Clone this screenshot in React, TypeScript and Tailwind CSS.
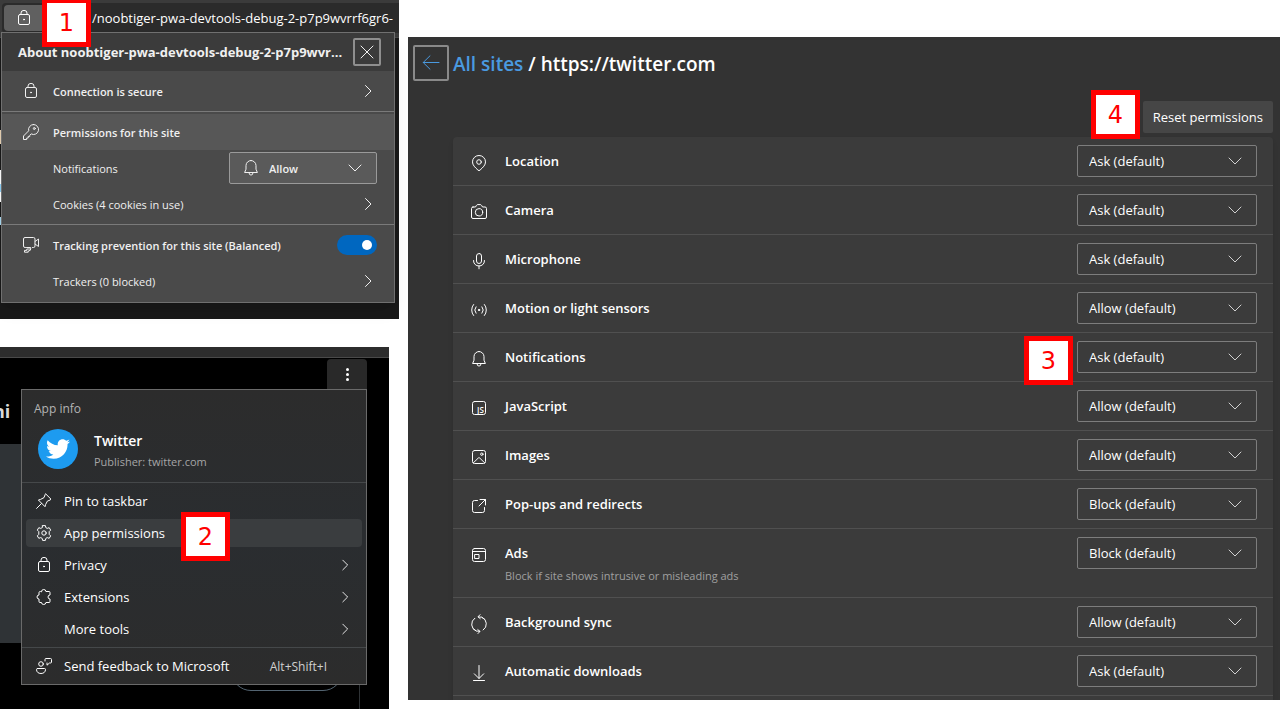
import type { ReactNode } from "react";
import { FaTwitter } from "react-icons/fa";

function Icon({ children, className = "size-4" }: { children: ReactNode; className?: string }) {
  return (
    <svg
      viewBox="0 0 16 16"
      fill="none"
      stroke="currentColor"
      strokeWidth="1"
      strokeLinecap="round"
      strokeLinejoin="round"
      aria-hidden="true"
      className={`shrink-0 overflow-visible ${className}`}
    >
      {children}
    </svg>
  );
}

const LockIcon = () => (
  <Icon>
    <rect x="2.5" y="4.5" width="11" height="10" rx="1.5" />
    <path d="M5 4.500V3a3 2.600 0 0 1 6 0v1.500" />
    <circle cx="8" cy="9.5" r="0.5" fill="currentColor" />
  </Icon>
);

const KeyIcon = () => (
  <Icon>
    <path d="M10.500.5a5 5 0 0 0-4.800 6.300L.5 12v3.500h3.200V14h1.500v-1.600h1.600v-1.200l1.400-1.300A5 5 0 1 0 10.500.5z" />
    <circle cx="11.300" cy="4.500" r="1" />
  </Icon>
);

const TrackingIcon = () => (
  <Icon>
    <path d="M2.500 10.500h-.5A1.500 1.500 0 0 1 .5 9V2A1.500 1.500 0 0 1 2 .5h8.500A1.500 1.500 0 0 1 12 2v7a1.500 1.500 0 0 1-1.500 1.500h-1" />
    <path d="M12 4.500l3.500-2.500v7.500L12 7M3.500 10.500h4.200v1.400a2 2 0 0 1-2 2H5.200v1.300h-3.700v-1.800h2.300v-1.400h3.800" />
  </Icon>
);

const BellIcon = () => (
  <Icon>
    <path d="M8 .5a5 5 0 0 0-5 5v3.700l-1.400 3.300h12.800L13 9.200V5.500a5 5 0 0 0-5-5z" />
    <path d="M6 12.800a2 2.300 0 0 0 4 0" />
  </Icon>
);

const LocationIcon = () => (
  <Icon>
    <path d="M8 15.500c-.4 0-.8-.2-1.100-.5C4 12.400 1.500 10.100 1.500 6.900a6.500 6.400 0 0 1 13 0c0 3.200-2.500 5.500-5.400 8.100-.3.3-.7.5-1.100.5z" />
    <circle cx="8" cy="7" r="2.300" />
  </Icon>
);

const CameraIcon = () => (
  <Icon>
    <path d="M2 3h2.500l1-1.700A1.500 1.500 0 0 1 6.700.6h2.600a1.500 1.500 0 0 1 1.200.7l1 1.700H14a1.500 1.500 0 0 1 1.500 1.500V13a1.500 1.500 0 0 1-1.500 1.500H2A1.500 1.500 0 0 1 .5 13V4.500A1.500 1.500 0 0 1 2 3z" />
    <circle cx="8" cy="8.300" r="3.700" />
  </Icon>
);

const MicIcon = () => (
  <Icon>
    <rect x="5.500" y="0.500" width="5" height="10" rx="2.500" />
    <path d="M2.600 7.500V8a5.400 5 0 0 0 10.800 0v-.5M8 13v2.800" />
  </Icon>
);

const SensorIcon = () => (
  <Icon>
    <circle cx="8" cy="8" r="0.700" fill="currentColor" />
    <path d="M5 4.800a5 5 0 0 0 0 6.400M11 4.800a5 5 0 0 1 0 6.400M2.600 2.500a8.500 8.500 0 0 0 0 11M13.400 2.500a8.500 8.500 0 0 1 0 11" />
  </Icon>
);

const ScriptIcon = () => (
  <Icon>
    <rect x="1.500" y="1.500" width="13" height="13" rx="2" />
    <text
      x="6"
      y="13"
      fontSize="8"
      fontWeight="600"
      fill="currentColor"
      stroke="none"
      fontFamily="Open Sans, sans-serif"
    >
      JS
    </text>
  </Icon>
);

const ImageIcon = () => (
  <Icon>
    <rect x="1.500" y="1.500" width="13" height="13" rx="2" />
    <circle cx="10.800" cy="5.200" r="1.200" />
    <path d="M2.300 13.900L7.300 9a1 1 0 0 1 1.400 0l5 4.900" />
  </Icon>
);

const PopupIcon = () => (
  <Icon>
    <path d="M6.500 2.500h-3a2 2 0 0 0-2 2v8a2 2 0 0 0 2 2h8a2 2 0 0 0 2-2v-3M9 1.500h5.500V7M14.500 1.500L8 8" />
  </Icon>
);

const AdsIcon = () => (
  <Icon>
    <rect x="1.500" y="1.500" width="13" height="13" rx="2" />
    <path d="M1.500 4.500h13M4 7.500h4v4H4z" />
  </Icon>
);

const SyncIcon = () => (
  <Icon>
    <path d="M3.800 2.200A7 7.300 0 0 0 5 15M12.200 14A7 7.300 0 0 0 11 1.200M13.500 3.200A7 7.300 0 0 0 7.300.8M2.500 13a7 7.300 0 0 0 6.200 2.400M9-1.300L7 .8l2.200 1.800M7 17.500l2-2.100-2.200-1.800" />
  </Icon>
);

const DownloadIcon = () => (
  <Icon>
    <path d="M8 .5v12.800M3.300 8.800L8 13.500l4.700-4.700M2.500 15.500h11" />
  </Icon>
);

const PinIcon = () => (
  <Icon>
    <path d="M9.800 1l5.200 5.200-1 .9-2.600 1-1.800 3.400-.6 2.200L2.400 7l2.200-.6L8 4.600l1-2.600zM5.500 10.500L.6 15.400" />
  </Icon>
);

const GearIcon = () => (
  <Icon>
    <circle cx="8" cy="8" r="2.200" />
    <path d="M6.600.6h2.800l.4 2 1.400.8 2-.7 1.500 2.400-1.500 1.500v2.800l1.500 1.500-1.500 2.400-2-.7-1.400.8-.4 2H6.600l-.4-2-1.400-.8-2 .7-1.500-2.400 1.500-1.500V6.600L1.300 5.100l1.500-2.400 2 .7 1.400-.8z" />
  </Icon>
);

const ExtensionIcon = () => (
  <Icon>
    <path d="M5.500 2.500a2.200 2 0 0 1 4.400 0h3.100a1 1 0 0 1 1 1V6a2 2 0 0 0 0 4v2.500a1 1 0 0 1-1 1H9.900a2.200 2 0 0 1-4.400 0H4a1 1 0 0 1-1-1V10a2 2 0 0 1 0-4V3.500a1 1 0 0 1 1-1z" />
  </Icon>
);

const FeedbackIcon = () => (
  <Icon>
    <circle cx="5" cy="6" r="2.300" />
    <path d="M1.500 10.500h7a1 1 0 0 1 1 1c0 2.500-1.800 4-4.500 4s-4.500-1.500-4.500-4a1 1 0 0 1 1-1zM9 3V1.500a1 1 0 0 1 1-1h4.500a1 1 0 0 1 1 1V4a1 1 0 0 1-1 1h-1L11 7.200V5" />
  </Icon>
);

const ChevronRight = ({ className = "size-4" }: { className?: string }) => (
  <Icon className={className}>
    <path d="M5.500 2.500L11 8l-5.500 5.500" />
  </Icon>
);

const ChevronDown = ({ className = "size-4" }: { className?: string }) => (
  <Icon className={className}>
    <path d="M2 5l6 6 6-6" />
  </Icon>
);

function Step({ n, className }: { n: number; className: string }) {
  return (
    <span
      className={`absolute z-10 flex size-[49px] items-center justify-center border-5 border-[#ff0000] bg-white font-['DejaVu_Sans',sans-serif] text-2xl leading-none text-[#ff0000] ${className}`}
    >
      {n}
    </span>
  );
}

function SiteInfo() {
  return (
    <section aria-label="Site information" className="relative bg-[#191919] pb-4">
      <Step n={1} className="-top-0.5 left-[42px]" />
      <div className="border-b border-[#4a4a4a] bg-[#3b3b3b] pt-[3px] pb-1">
        <div className="ml-0.5 flex h-[30px] items-center gap-6 overflow-hidden rounded-l bg-[#2b2b2b] pl-0.5">
          <button
            type="button"
            aria-label="View site information"
            className="flex h-[26px] w-[64px] shrink-0 items-center rounded-l bg-[#606060] pl-3"
          >
            <LockIcon />
          </button>
          <span className="pt-0.5 text-[13px] whitespace-nowrap">/noobtiger-pwa-devtools-debug-2-p7p9wvrrf6gr6-</span>
        </div>
      </div>

      <div className="absolute top-[130px] left-0 flex w-px flex-col">
        <span className="h-3.5 bg-[#e8d2b4]" />
        <span className="mt-[26px] h-3.5 bg-white" />
        <span className="h-2 bg-[#8fd0f5]" />
        <span className="h-2.5 bg-white" />
        <span className="mt-[15px] h-2 bg-[#a8d8f0]" />
      </div>

      <div className="relative z-[1] -mt-1.5 mr-1 ml-px border border-[#707070] bg-[#4a4a4a] pb-[3px] text-[11px] font-semibold text-[#f0f0f0] shadow-lg">
        <div className="flex h-[38px] items-center gap-1 bg-[#3b3b3b] pr-[13px] pl-4">
          <h2 className="flex-1 pt-0.5 text-[13px] font-bold whitespace-nowrap">
            About noobtiger-pwa-devtools-debug-2-p7p9wvr...
          </h2>
          <button
            type="button"
            aria-label="Close"
            className="flex size-7 shrink-0 items-center justify-center rounded-xs border-2 border-[#8f8f8f]"
          >
            <Icon>
              <path d="M2 2l12 12M14 2L2 14" />
            </Icon>
          </button>
        </div>
        <button type="button" className="flex h-10 w-full items-center gap-3.5 pr-[18px] pl-[21px] text-left">
          <LockIcon />
          <span className="flex-1 pt-0.5">Connection is secure</span>
          <ChevronRight />
        </button>
        <div className="border-t border-[#7a7a7a] py-0.5">
          <h3 className="flex h-9 items-center gap-3.5 bg-[#575757] pl-[21px]">
            <KeyIcon />
            <span className="pt-0.5">Permissions for this site</span>
          </h3>
          <div className="flex h-9 items-center justify-between pr-[17px] pl-[51px]">
            <label htmlFor="site-notifications" className="pt-0.5 font-medium">
              Notifications
            </label>
            <div className="grid h-8 w-[148px] items-center rounded-xs border border-[#9a9a9a] bg-[#5a5a5a]">
              <select
                id="site-notifications"
                defaultValue="Allow"
                className="col-start-1 row-start-1 h-full w-full appearance-none pt-0.5 pl-[39px] outline-none"
              >
                <option>Allow</option>
                <option>Block</option>
              </select>
              <div className="pointer-events-none col-start-1 row-start-1 flex justify-between px-[13px]">
                <BellIcon />
                <ChevronDown />
              </div>
            </div>
          </div>
          <button
            type="button"
            className="flex h-9 w-full items-center justify-between pr-[18px] pl-[51px] text-left font-medium"
          >
            <span className="pt-0.5">Cookies (4 cookies in use)</span>
            <ChevronRight />
          </button>
        </div>
        <div className="border-t border-[#7a7a7a] pt-0.5">
          <div className="flex h-9 items-center gap-3.5 pr-[17px] pl-[21px]">
            <TrackingIcon />
            <label htmlFor="tracking" className="flex-1 pt-0.5">
              Tracking prevention for this site (Balanced)
            </label>
            <input
              id="tracking"
              type="checkbox"
              role="switch"
              defaultChecked
              className="flex h-5 w-10 appearance-none items-center justify-end rounded-full bg-[#0067c0] px-[5px] before:size-2.5 before:rounded-full before:bg-white"
            />
          </div>
          <button
            type="button"
            className="flex h-9 w-full items-center justify-between pr-[18px] pl-[51px] text-left font-medium"
          >
            <span className="pt-0.5">Trackers (0 blocked)</span>
            <ChevronRight />
          </button>
        </div>
      </div>
    </section>
  );
}

type MenuEntry = { label: string; icon?: ReactNode; submenu?: boolean; active?: boolean };

const menuEntries: MenuEntry[] = [
  { label: "Pin to taskbar", icon: <PinIcon /> },
  { label: "App permissions", icon: <GearIcon />, active: true },
  { label: "Privacy", icon: <LockIcon />, submenu: true },
  { label: "Extensions", icon: <ExtensionIcon />, submenu: true },
  { label: "More tools", submenu: true },
];

function AppMenu() {
  return (
    <section aria-label="App window" className="relative mr-2.5 bg-black pb-6">
      <Step n={2} className="top-[165px] left-[181px]" />
      <div className="h-[11px] border-b border-[#4a4a4a] bg-[#2d2d2d]" />
      <div className="flex justify-end pt-px pr-[22px]">
        <button
          type="button"
          aria-label="App menu"
          className="flex h-[30px] w-10 flex-col items-center justify-center gap-0.5 rounded-t bg-[#292929]"
        >
          <span className="size-[3px] rounded-full bg-white" />
          <span className="size-[3px] rounded-full bg-white" />
          <span className="size-[3px] rounded-full bg-white" />
        </button>
      </div>

      <div className="absolute top-[50px] left-0 flex w-[22px] flex-col overflow-hidden">
        <span className="-ml-[7px] h-[47px] text-lg font-bold text-[#d9d9d9]">hi</span>
        <span className="h-[199px] bg-[#2f3336]" />
      </div>
      <span className="absolute right-[46px] bottom-[18px] h-10 w-28 rounded-full border border-[#536471]" />
      <span className="absolute right-[29px] bottom-0 h-10 w-px bg-[#2f3336]" />

      <div className="relative mr-[22px] ml-[21px] border border-[#6a6a6a] bg-linear-to-b from-[#2c2c2c] via-[#2a2d30] to-[#2c2c2c] text-[13px]">
        <div className="border-b border-[#45484a] px-3 pt-2 pb-[11px]">
          <h2 className="h-[22px] text-xs leading-[22px] text-[#b4b4b4]">App info</h2>
          <div className="mt-[7px] flex items-center gap-4 pl-1">
            <span className="flex size-10 items-center justify-center rounded-full bg-[#1d9bf0]">
              <FaTwitter className="size-6" />
            </span>
            <div className="pt-0.5">
              <p className="text-sm leading-6 font-semibold">Twitter</p>
              <p className="h-[18px] text-[11px] leading-[18px] text-[#a6a6a6]">Publisher: twitter.com</p>
            </div>
          </div>
        </div>
        <ul className="flex flex-col gap-1 p-1">
          {menuEntries.map((entry) => (
            <li key={entry.label}>
              <button
                type="button"
                className={`flex h-7 w-full items-center gap-3 rounded px-2.5 text-left ${entry.active ? "bg-[#3a3d3f]" : ""}`}
              >
                <span className="size-4">{entry.icon}</span>
                <span className="flex-1 pt-0.5">{entry.label}</span>
                {entry.submenu && <ChevronRight className="size-3.5" />}
              </button>
            </li>
          ))}
        </ul>
        <button
          type="button"
          className="flex h-[37px] w-full items-center gap-3 border-t border-[#45484a] pr-[39px] pl-3.5 text-left"
        >
          <FeedbackIcon />
          <span className="flex-1 pt-0.5 whitespace-nowrap">Send feedback to Microsoft</span>
          <span className="pt-0.5 text-xs text-[#d0d0d0]">Alt+Shift+I</span>
        </button>
      </div>
    </section>
  );
}

type Permission = { name: string; value: string; icon: ReactNode; note?: string };

const permissions: Permission[] = [
  { name: "Location", value: "Ask (default)", icon: <LocationIcon /> },
  { name: "Camera", value: "Ask (default)", icon: <CameraIcon /> },
  { name: "Microphone", value: "Ask (default)", icon: <MicIcon /> },
  { name: "Motion or light sensors", value: "Allow (default)", icon: <SensorIcon /> },
  { name: "Notifications", value: "Ask (default)", icon: <BellIcon /> },
  { name: "JavaScript", value: "Allow (default)", icon: <ScriptIcon /> },
  { name: "Images", value: "Allow (default)", icon: <ImageIcon /> },
  { name: "Pop-ups and redirects", value: "Block (default)", icon: <PopupIcon /> },
  {
    name: "Ads",
    value: "Block (default)",
    icon: <AdsIcon />,
    note: "Block if site shows intrusive or misleading ads",
  },
  { name: "Background sync", value: "Allow (default)", icon: <SyncIcon /> },
  { name: "Automatic downloads", value: "Ask (default)", icon: <DownloadIcon /> },
];

function PermissionRow({ permission }: { permission: Permission }) {
  const id = permission.name.toLowerCase().replace(/\s+/g, "-");
  return (
    <li className="relative flex items-start border-b border-[#505050] pr-4 pl-[18px]">
      <span className="mt-[18px] mr-[18px]">{permission.icon}</span>
      <div className="flex-1 pt-3">
        <label htmlFor={id} className="block leading-6 font-semibold">
          {permission.name}
        </label>
        {permission.note && <p className="pt-0.5 pb-3 text-[11px] leading-[18px] text-[#a0a0a0]">{permission.note}</p>}
      </div>
      {permission.name === "Notifications" && <Step n={3} className="top-[3px] right-[200px]" />}
      <div className="my-2 grid h-8 w-[180px] items-center rounded-xs border border-[#7d7d7d]">
        <select
          id={id}
          defaultValue={permission.value}
          className="col-start-1 row-start-1 h-full w-full appearance-none pt-0.5 pl-[11px] outline-none"
        >
          <option>Ask (default)</option>
          <option>Allow (default)</option>
          <option>Block (default)</option>
        </select>
        <ChevronDown className="pointer-events-none col-start-1 row-start-1 mr-[13px] size-4 justify-self-end text-[#d0d0d0]" />
      </div>
    </li>
  );
}

function SitePermissions() {
  return (
    <main className="mt-[37px] overflow-hidden bg-[#333333] pt-2 pr-[7px] pl-[5px] text-[13px]">
      <header className="flex items-center gap-1">
        <button
          type="button"
          aria-label="Back"
          className="flex size-9 items-center justify-center rounded-xs border-2 border-[#8a8a8a] text-[#4a9ae0]"
        >
          <Icon>
            <path d="M.2 7.500h15.800M7 .8L.2 7.500 7 14.200" />
          </Icon>
        </button>
        <h1 className="pt-0.5 text-[19px] leading-7 font-semibold">
          <a href="#sites" className="text-[#4a9ae0]">
            All sites
          </a>{" "}
          / https://twitter.com
        </h1>
      </header>
      <div className="relative mt-5 flex justify-end">
        <Step n={4} className="-top-[11px] right-[133px]" />
        <button type="button" className="h-8 rounded-xs bg-[#464646] px-2.5 pt-0.5">
          Reset permissions
        </button>
      </div>
      <ul className="mt-1 ml-10 rounded-t bg-[#3b3b3b] pb-1 shadow-md">
        {permissions.map((permission) => (
          <PermissionRow key={permission.name} permission={permission} />
        ))}
      </ul>
    </main>
  );
}

export default function App() {
  return (
    <div className="grid grid-cols-[399fr_872fr] items-start gap-[9px] overflow-hidden bg-white font-['Open_Sans','Noto_Sans',sans-serif] text-white">
      <div className="flex min-w-0 flex-col gap-7">
        <SiteInfo />
        <AppMenu />
      </div>
      <SitePermissions />
    </div>
  );
}
